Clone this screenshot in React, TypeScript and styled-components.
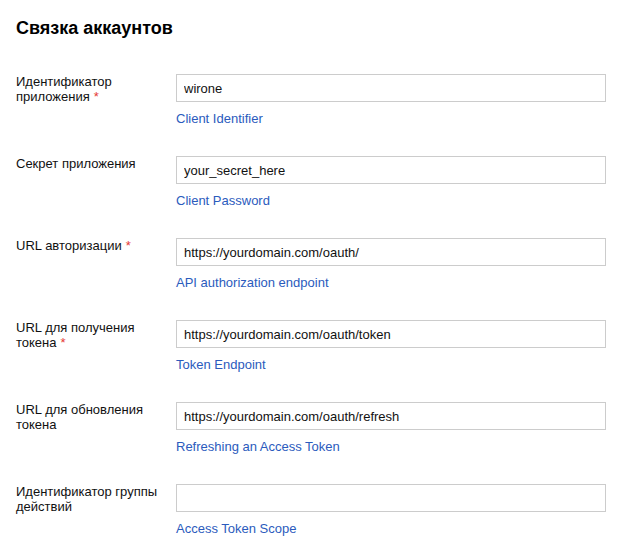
import React from "react";
import styled, { createGlobalStyle } from "styled-components";

const Global = createGlobalStyle`
  html, body { margin: 0; padding: 0; background: #fff; }
  body { font-family: Arial, "Liberation Sans", sans-serif; color: #000; }
`;

const Page = styled.div`
  padding: 16px 16px 0 16px;
  width: 590px;
`;

const Title = styled.h1`
  margin: 0 0 34px 0;
  font-size: 18px;
  line-height: 24px;
  font-weight: bold;
  color: #000;
`;

const Form = styled.div`
  display: flex;
  flex-direction: column;
  gap: 29px;
`;

const Row = styled.div`
  display: grid;
  grid-template-columns: 160px 430px;
  align-items: start;
`;

const Label = styled.label`
  font-size: 13px;
  line-height: 15px;
  padding-top: 0;
  padding-right: 10px;
  color: #111;
`;

const Req = styled.span`
  color: #e53935;
  margin-left: 4px;
`;

const Field = styled.div`
  display: flex;
  flex-direction: column;
  align-items: flex-start;
`;

const Input = styled.input`
  box-sizing: border-box;
  width: 430px;
  height: 28px;
  border: 1px solid #cccccc;
  padding: 0 7px;
  font-family: Arial, "Liberation Sans", sans-serif;
  font-size: 13px;
  color: #111;
  outline: none;
  background: #fff;
`;

const Help = styled.a`
  margin-top: 9px;
  font-size: 13px;
  line-height: 16px;
  color: #2b5bbd;
  text-decoration: none;
`;

const fields = [
  { label: "Идентификатор приложения", req: true, value: "wirone", help: "Client Identifier" },
  { label: "Секрет приложения", req: false, value: "your_secret_here", help: "Client Password" },
  { label: "URL авторизации", req: true, value: "https://yourdomain.com/oauth/", help: "API authorization endpoint" },
  { label: "URL для получения токена", req: true, value: "https://yourdomain.com/oauth/token", help: "Token Endpoint" },
  { label: "URL для обновления токена", req: false, value: "https://yourdomain.com/oauth/refresh", help: "Refreshing an Access Token" },
  { label: "Идентификатор группы действий", req: false, value: "", help: "Access Token Scope" },
];

export default function App() {
  return (
    <>
      <Global />
      <Page>
        <Title>Связка аккаунтов</Title>
        <Form>
          {fields.map((f) => (
            <Row key={f.help}>
              <Label>
                {f.label}
                {f.req && <Req>*</Req>}
              </Label>
              <Field>
                <Input defaultValue={f.value} />
                <Help href="#">{f.help}</Help>
              </Field>
            </Row>
          ))}
        </Form>
      </Page>
    </>
  );
}
